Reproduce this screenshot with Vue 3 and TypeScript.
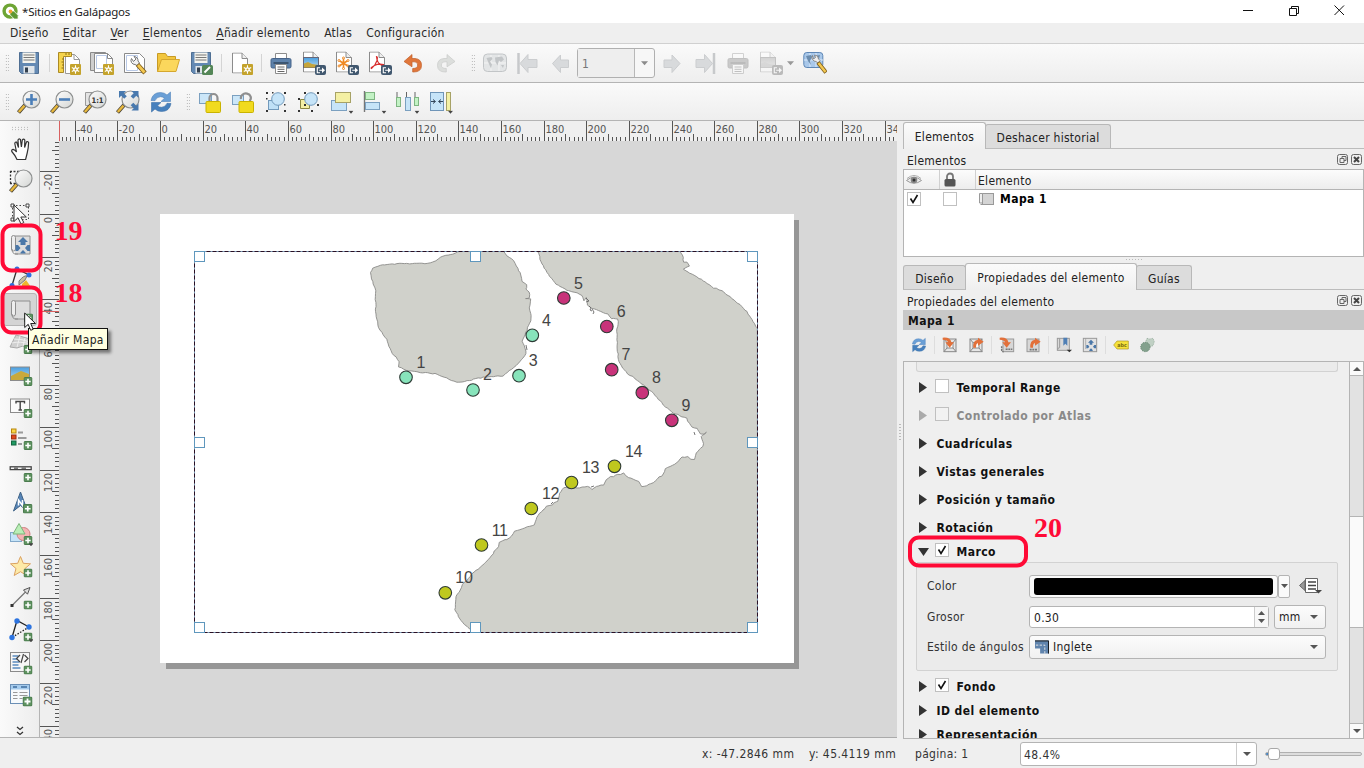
<script setup lang="ts">
type Pt = [number, number]

const menus = [
  { pre: 'Di', key: 's', post: 'eño' },
  { pre: '', key: 'E', post: 'ditar' },
  { pre: '', key: 'V', post: 'er' },
  { pre: '', key: 'E', post: 'lementos' },
  { pre: '', key: 'A', post: 'ñadir elemento' },
  { pre: 'Atlas', key: '', post: '' },
  { pre: 'Configuración', key: '', post: '' },
]

const barFile = ['save', '|', 'newlayout', 'duplicate', 'manager', 'folder', 'saveas', '|', 'addpage', '|', 'print', 'eximage', 'exsvg', 'expdf', 'undo', 'redo']
const barView = ['zoomin', 'zoomout', 'zoomone', 'zoomfull', 'refresh']
const barArrange = ['lock', 'unlock', 'group', 'ungroup', 'raise', 'align', 'distribute', 'resize']
const tools = ['hand', 'zoomarea', 'select', 'movecontent', 'editnodes', 'addmap', 'add3d', 'addimage', 'addlabel', 'addlegend', 'addscale', 'addnorth', 'addshape', 'addmarker', 'addarrow', 'addnode', 'addhtml', 'addtable']
const itemTools = ['refresh', '|', 'extset', 'extview', '|', 'scaleset', 'scaleview', '|', 'bookmark', 'move', '|', 'labels', 'clip']

const SCALE = 2.1315
const buildTicks = (origin: number, from: number, to: number) => {
  const out: { pos: number; size: number; label: string }[] = []
  for (let u = -60; u <= 360; u += 2) {
    const pos = Math.round(origin + u * SCALE) + 0.5
    if (pos < from || pos > to) continue
    out.push({ pos, size: u % 20 === 0 ? 20 : u % 10 === 0 ? 7 : 4, label: u % 20 === 0 ? String(u) : '' })
  }
  return out
}
const hTicks = buildTicks(160, 61, 897)
const vTicks = buildTicks(214, 142, 738)

/* Subdivides a coastline with a repeatable jitter so it looks naturally eroded. */
const coast = (pts: Pt[], amp: number): string => {
  let seed = 7
  const rnd = () => {
    seed = (seed * 16807) % 2147483647
    return seed / 2147483647 - 0.5
  }
  const out: string[] = []
  for (let i = 0; i < pts.length - 1; i++) {
    const [x1, y1] = pts[i]
    const [x2, y2] = pts[i + 1]
    const len = Math.hypot(x2 - x1, y2 - y1)
    const straight = len > 60
    const n = straight ? 1 : Math.max(1, Math.round(len / 2.6))
    for (let k = 0; k < n; k++) {
      const t = k / n
      const a = straight ? 0 : amp
      out.push(`${(x1 + (x2 - x1) * t + rnd() * a).toFixed(1)},${(y1 + (y2 - y1) * t + rnd() * a).toFixed(1)}`)
    }
  }
  out.push(pts[pts.length - 1].join(','))
  return 'M' + out.join('L')
}

const islandWest = coast([
  [460.3, 251], [453, 254], [443, 256], [433, 262], [427, 263.3], [397, 263.7], [380, 265.3], [372.7, 268], [370.3, 272.7],
  [371.7, 279], [375.3, 288.3], [375.6, 302], [376, 316.7], [378.7, 327.3], [386.7, 339], [391, 351], [398.7, 361.3], [398.7, 366.7],
  [406, 370.3], [420, 372.3], [435, 373.7], [444, 377.3], [456.7, 382.3], [466.7, 381], [483.3, 377.3], [503.3, 375.7],
  [511.7, 369.3], [520, 362.3], [526, 353.3], [524.5, 346], [522, 341], [526.7, 330], [531.3, 318.3], [529.3, 308], [530.5, 299], [525.5, 298.8], [529.5, 297.5],
  [529.3, 291.7], [526, 289.5], [527, 285], [522.3, 281.7], [520, 273], [515, 263.3], [512, 258.7], [507, 256], [503.3, 251],
], 0.9)

const islandEast = coast([
  [538.3, 251], [540.7, 261.7], [546.7, 272.3], [556, 284.3], [566.7, 290], [581.7, 295], [584, 301], [586.5, 297.5], [587, 305], [592, 308.3],
  [598.3, 310.7], [608.3, 314], [611, 319], [618, 318.5], [616.7, 340], [619, 361.7], [626, 372], [643.3, 385], [653.3, 393.3],
  [663.3, 405], [673.3, 413.3], [686.7, 418.3], [691.7, 427.7], [697, 428], [701, 434.5], [706.7, 432.7], [700.7, 436.7], [704, 444], [696.7, 453.3],
  [694, 460], [691, 459.5], [688, 457], [681.7, 456.7], [675, 464.3], [665, 468.3], [663.3, 474], [651, 484], [641.7, 486.7], [638.3, 481.7], [628.3, 477.3],
  [623.3, 473.3], [608.3, 477.7], [603.3, 485], [596, 486.3], [591.7, 489.3], [588, 486.3], [576.7, 488.3], [563.3, 487.7], [559.3, 493], [558, 501], [552, 504.5], [546.7, 506.7],
  [536.7, 517.3], [534.3, 524.3], [515, 531.7], [510, 538.3], [499.3, 542], [498, 547], [488, 560], [471.7, 574], [462.7, 585],
  [456, 596.7], [455, 610], [461, 621], [471.7, 631], [471.8, 633], [757.5, 633], [757.5, 328], [746.7, 311.7], [734, 300], [721.7, 290.7],
  [713.3, 287.7], [696.7, 276.7], [683.3, 269.3], [689.5, 266], [687, 262], [683.3, 261.7], [682.5, 255], [680, 251],
], 1.1)

const sites = [
  { n: 1, x: 406, y: 377.3, lx: 416.5, ly: 368, g: 'green' },
  { n: 2, x: 473, y: 390, lx: 483, ly: 380, g: 'green' },
  { n: 3, x: 519, y: 375.7, lx: 528.7, ly: 365.5, g: 'green' },
  { n: 4, x: 532.3, y: 335.3, lx: 542, ly: 325.7, g: 'green' },
  { n: 5, x: 563.8, y: 298, lx: 574, ly: 288.7, g: 'pink' },
  { n: 6, x: 606.8, y: 326.5, lx: 616.7, ly: 317, g: 'pink' },
  { n: 7, x: 611.7, y: 369.7, lx: 621.5, ly: 360, g: 'pink' },
  { n: 8, x: 642.3, y: 392.7, lx: 652, ly: 383, g: 'pink' },
  { n: 9, x: 671.8, y: 420.3, lx: 681.5, ly: 410.7, g: 'pink' },
  { n: 14, x: 614.5, y: 466.3, lx: 625, ly: 456.7, g: 'lime' },
  { n: 13, x: 571.5, y: 482.5, lx: 582, ly: 473, g: 'lime' },
  { n: 12, x: 531.3, y: 508.5, lx: 542, ly: 499, g: 'lime' },
  { n: 11, x: 481.5, y: 545, lx: 491.7, ly: 536, g: 'lime' },
  { n: 10, x: 445.3, y: 592.8, lx: 455.3, ly: 583, g: 'lime' },
]
const grips: Pt[] = [[194.5, 251.5], [470.5, 251.5], [747.5, 251.5], [194.5, 437.5], [747.5, 437.5], [194.5, 622.5], [470.5, 622.5], [747.5, 622.5]]

interface Section { label: string; check?: 'on' | 'off'; dim?: boolean }
const upper: Section[] = [
  { label: 'Temporal Range', check: 'off' },
  { label: 'Controlado por Atlas', check: 'off', dim: true },
  { label: 'Cuadrículas' },
  { label: 'Vistas generales' },
  { label: 'Posición y tamaño' },
  { label: 'Rotación' },
]
const lower: Section[] = [{ label: 'Fondo', check: 'on' }, { label: 'ID del elemento' }, { label: 'Representación' }]
</script>

<template>
  <div class="window">
    <svg class="defs" width="0" height="0">
      <defs>
        <linearGradient id="gGlass" x1="0" y1="0" x2="1" y2="1"><stop offset="0" stop-color="#fdfdfd" /><stop offset="1" stop-color="#d4d6d4" /></linearGradient>
        <linearGradient id="gSky" x1="0" y1="0" x2="0" y2="1"><stop offset="0" stop-color="#4a9fe0" /><stop offset="1" stop-color="#b5d8ee" /></linearGradient>
        <symbol id="b-plus" viewBox="0 0 9 9"><rect x=".5" y=".5" width="8" height="8" rx="1" fill="#5e9360" stroke="#4a7b4d" /><path d="M4.500 1.800v5.400M1.800 4.500h5.400" stroke="#fff" stroke-width="1.600" /></symbol>
        <symbol id="b-star" viewBox="0 0 11 11"><rect width="11" height="11" rx="1" fill="#c4a32c" /><path d="M5.500 1.200v8.600M1.800 3.400l7.400 4.200M9.200 3.400L1.800 7.600" stroke="#fff" stroke-width="1.100" /><circle cx="5.500" cy="5.500" r="2.300" fill="#fff" /><circle cx="5.500" cy="5.500" r="1" fill="#c4a32c" /></symbol>
        <symbol id="b-exp" viewBox="0 0 11 11"><rect width="11" height="10" rx="2" fill="#41586f" /><path d="M5 2.800H2.300v5H5M4.200 5.300h3.400" fill="none" stroke="#fff" stroke-width="1.100" /><path d="M7 2.600L10 5.300 7 8z" fill="#fff" /></symbol>
        <symbol id="page" viewBox="0 0 16 21"><path d="M.5.500h9.500l5.500 5.500v14.500H.5z" fill="#fff" stroke="#8c8c8c" /><path d="M10 .5V6h5.500" fill="#eee" stroke="#8c8c8c" /></symbol>
        <symbol id="lens" viewBox="0 0 24 24"><path d="M1.500 22.500L8.500 14.500" stroke="#4b4435" stroke-width="4" /><path d="M1.800 22L7.500 15.600" stroke="#e8b93e" stroke-width="2.400" /><circle cx="14.500" cy="9.500" r="8.500" fill="url(#gGlass)" stroke="#8d8f8f" stroke-width="1.200" /></symbol>
        <symbol id="drop" viewBox="0 0 6 4"><path d="M0 0h6L3 3.500z" fill="#444" /></symbol>
        <symbol id="scroll" viewBox="0 0 20 20"><path d="M4 1h15v18H4" fill="#ddd" stroke="#8e8e8e" /><rect x=".5" y=".5" width="4" height="15.500" rx="2" fill="#eee" stroke="#8e8e8e" /><path d="M1 14q0 5 4 5h2" fill="none" stroke="#8e8e8e" /></symbol>

        <symbol id="save" viewBox="0 0 24 24"><path d="M2.500 1.500h19v21h-17l-2-2z" fill="#6389b3" stroke="#4f6f93" /><rect x="5.500" y="1.500" width="13" height="10.500" fill="#f4f4ee" /><path d="M6.500 4h11M6.500 6.500h11M6.500 9h11" stroke="#777" /><rect x="6.500" y="15" width="11" height="7.500" fill="#dfe5ea" /><rect x="8" y="16.500" width="3" height="5" fill="#33414f" /></symbol>
        <symbol id="saveas" viewBox="0 0 24 24"><use href="#save" /><rect x="13" y="14" width="11" height="10" rx="1.500" fill="#548657" /><path d="M15.500 21.500l5.500-5.500" stroke="#fff" stroke-width="2" /></symbol>
        <symbol id="newlayout" viewBox="0 0 24 24"><path d="M8.500 3.500h9l5 5v14h-14z" fill="#fff" stroke="#999" /><path d="M17 3.500v5h5.500" fill="none" stroke="#999" /><path d="M1.500 1.500h13v4h-8v16h-5z" fill="#f5d34b" stroke="#ab8a24" /><path d="M5 8h2M4.500 11h2M5 14h2M4.500 17h2M9 2v2M12 2v2" stroke="#8a6e1a" /><use href="#b-star" x="13" y="13" width="11" height="11" /></symbol>
        <symbol id="duplicate" viewBox="0 0 24 24"><path d="M.5 1.500h15v18h-15z" fill="#cfcfcf" stroke="#8a8a8a" /><path d="M4.500 2.500h13l5 5v14h-18z" fill="#fff" stroke="#8a8a8a" /><path d="M6.500 4.500h10v13h-10z" fill="#fff" stroke="#b9c9e6" /><path d="M17.500 2.500v5h5" fill="none" stroke="#8a8a8a" /><use href="#b-star" x="13" y="13" width="11" height="11" /></symbol>
        <symbol id="manager" viewBox="0 0 24 24"><path d="M1.500 2.500h15l5 5v14h-20z" fill="#fff" stroke="#8a8a8a" /><path d="M3.500 4.500h11v15h-11z" fill="none" stroke="#b9c9e6" /><path d="M8.500 7.500a4 4 0 0 0 3.500 6l2 1 2.500-2.500-1.500-2a4 4 0 0 0-4-4.500l2 2.500-2.500 2.500z" fill="#f2f2f2" stroke="#777" /><path d="M14.500 13.500l7.500 8.500" stroke="#7c5c1c" stroke-width="4.500" /><path d="M15 14l6.500 7.500" stroke="#f3c74f" stroke-width="2.800" /></symbol>
        <symbol id="folder" viewBox="0 0 24 24"><path d="M1.500 20.500v-18h8l2 3h8v4" fill="#f2c63e" stroke="#c79a25" /><path d="M1.500 20.500l4-12h18l-3.500 12z" fill="#fbd75c" stroke="#d5a72e" /></symbol>
        <symbol id="addpage" viewBox="0 0 24 24"><use href="#page" x="3" y="1.500" width="16" height="21" /><use href="#b-star" x="13" y="13" width="11" height="11" /></symbol>
        <symbol id="print" viewBox="0 0 24 24"><path d="M6.500 9v-6.500h11v6.500z" fill="#fff" stroke="#8c8c8c" /><rect x="2" y="7.500" width="20" height="9.500" rx="1.500" fill="#5e82ab" stroke="#47648a" /><path d="M4.500 12h15" stroke="#33475f" stroke-width="1.500" /><path d="M6.500 13.500h11v9h-11z" fill="#fff" stroke="#8c8c8c" /><path d="M8.500 16h7M8.500 18.300h7M8.500 20.500h7" stroke="#666" /></symbol>
        <symbol id="eximage" viewBox="0 0 24 24"><use href="#page" x="1" y=".5" width="16" height="21" /><rect x="1.500" y="6.500" width="15" height="10" fill="url(#gSky)" stroke="#667" /><path d="M2 16.500v-4l4-1.500 4 2 6.500 1v2.500z" fill="#c7a53a" /><use href="#b-exp" x="13" y="14" width="11" height="11" /></symbol>
        <symbol id="exsvg" viewBox="0 0 24 24"><use href="#page" x="1" y=".5" width="16" height="21" /><path d="M8.500 7v10.500M4 9.500l9 5.500M13 9.500l-9 5.500" stroke="#f08a24" stroke-width="1.600" /><g fill="#fff" stroke="#f08a24"><circle cx="8.500" cy="7" r="1" /><circle cx="8.500" cy="17.500" r="1" /><circle cx="4" cy="9.500" r="1" /><circle cx="13" cy="15" r="1" /><circle cx="13" cy="9.500" r="1" /><circle cx="4" cy="15" r="1" /></g><use href="#b-exp" x="13" y="14" width="11" height="11" /></symbol>
        <symbol id="expdf" viewBox="0 0 24 24"><use href="#page" x="1" y=".5" width="16" height="21" /><path d="M8.500 5.500q1.500 0 .5 4-1.500 5-5.500 8-1.500-.5 3-3 4-2 9-1 .5 1.500-2 .8-4.500-2-5-8.800z" fill="none" stroke="#d83030" stroke-width="1.200" /><use href="#b-exp" x="13" y="14" width="11" height="11" /></symbol>
        <symbol id="undo" viewBox="0 0 24 24"><path d="M3 10.500l8-7v4h3q6.500.5 6.500 7t-8 6.500h-.8v-3.500q5 0 5-3.500t-3.500-3.200h-2.200v5z" fill="#e0763a" stroke="#c05f28" stroke-width=".7" /></symbol>
        <symbol id="redo" viewBox="0 0 24 24"><path d="M21 10.500l-8-7v4h-3q-6.500.5-6.500 7t8 6.500h.8v-3.500q-5 0-5-3.500t3.500-3.200h2.200v5z" fill="#dcdedc" stroke="#c8cac8" stroke-width=".7" /></symbol>
        <symbol id="atlas" viewBox="0 0 24 24"><rect x=".5" y="3" width="23" height="17.500" rx="4" fill="#e3e5e6" stroke="#c2c5c7" /><path d="M1 12h22M8 4v16M16 4v16" stroke="#f4f4f4" /><path d="M3.500 7l5-1 1 2-2.500 2.500 2 3-1 4-2-4.500zM12 6.500l7-1 2 3-3 2.500-2-1.500-1.500 5-2-3.500zM18 14l3 0-1 3z" fill="#c2c5c7" /></symbol>
        <symbol id="first" viewBox="0 0 24 24"><path d="M2.500 2v21" stroke="#c7c9cb" stroke-width="2.500" /><path d="M4 12.500l8-9v5h9v8h-9v5z" fill="#d8dadc" stroke="#cbcdcf" /></symbol>
        <symbol id="prev" viewBox="0 0 24 24"><path d="M3.500 12.500l8-8.500v5h8v7.500h-8v5z" fill="#d8dadc" stroke="#cbcdcf" /></symbol>
        <symbol id="next" viewBox="0 0 24 24"><path d="M20 12.500l-8-8.500v5h-8v7.500h8v5z" fill="#d8dadc" stroke="#cbcdcf" /></symbol>
        <symbol id="last" viewBox="0 0 24 24"><path d="M21 2v21" stroke="#c7c9cb" stroke-width="2.500" /><path d="M19.500 12.500l-8-9v5h-8.500v8h8.500v5z" fill="#d8dadc" stroke="#cbcdcf" /></symbol>
        <symbol id="atlasset" viewBox="0 0 24 24"><rect x=".8" y="1.500" width="19" height="15" rx="3" fill="#a9c8ea" stroke="#5d86b5" /><path d="M1 9h19M7 2v14M13 2v14" stroke="#dceafa" /><path d="M3 5l5-1 1 2-2 4 1 4-3-4zM11 5l6-1-1 4z" fill="#6b8cae" /><path d="M9.500 4.500a4 4 0 0 0 3.500 6l2 1.500 2-2.500-1.500-1.500a4 4 0 0 0-4-4l1 2.500-2 1.500z" fill="#eee" stroke="#777" stroke-width=".8" /><path d="M15 11.500l8 10" stroke="#7c5c1c" stroke-width="4" /><path d="M15.500 12l7 9" stroke="#f3c74f" stroke-width="2.400" /></symbol>

        <symbol id="zoomin" viewBox="0 0 24 24"><use href="#lens" /><path d="M14.500 4v11M9 9.500h11" stroke="#4c7fb8" stroke-width="2.600" /></symbol>
        <symbol id="zoomout" viewBox="0 0 24 24"><use href="#lens" /><path d="M9 9.500h11" stroke="#4c7fb8" stroke-width="2.600" /></symbol>
        <symbol id="zoomone" viewBox="0 0 24 24"><path d="M2.500 2.500h9v13h-9z" fill="#e4e4e4" stroke="#9a9a9a" /><use href="#lens" /><text x="14.500" y="12.500" text-anchor="middle" class="one">1:1</text></symbol>
        <symbol id="zoomfull" viewBox="0 0 24 24"><use href="#lens" /><g fill="#4879ae"><path d="M3 1h7L7.800 3.200l3 3-2.600 2.600-3-3L3 8zM22.500 1h-7l2.200 2.200-3 3 2.600 2.600 3-3L22.500 8zM22.500 20.500h-7l2.200-2.200-3-3 2.600-2.600 3 3 2.200-2.200z" /></g></symbol>
        <symbol id="refresh" viewBox="0 0 24 24"><path d="M2 10.500q1.500-8 9.500-8 4 0 6.500 2.500l3.500-3v9.500H12l3.500-3.300q-1.500-1.500-4-1.500-4 .2-5.500 4z" fill="#6a9fd6" stroke="#5083ba" stroke-width=".6" /><path d="M22 13.500q-1.500 8-9.500 8-4 0-6.500-2.500L2.500 22v-9.500H12l-3.500 3.300q1.500 1.500 4 1.500 4-.2 5.500-4z" fill="#4680bd" stroke="#3a6fa6" stroke-width=".6" /></symbol>
        <symbol id="lock" viewBox="0 0 24 24"><rect x="1.500" y="3.500" width="12" height="10" fill="#cbe6f8" stroke="#7ba0c0" /><path d="M11.500 12v-4a4 4 0 0 1 8 0v4" fill="none" stroke="#8f8f8f" stroke-width="2.200" /><rect x="8" y="11.500" width="14.500" height="11" rx="1" fill="#f1da1f" stroke="#c9b300" /></symbol>
        <symbol id="unlock" viewBox="0 0 24 24"><rect x="1.500" y="5.500" width="11" height="9" fill="#cbe6f8" stroke="#7ba0c0" /><path d="M10 9a5 4.500 0 1 1 8.500 2" fill="none" stroke="#8f8f8f" stroke-width="2.200" /><rect x="8" y="11.500" width="14.500" height="11" rx="1" fill="#f1da1f" stroke="#c9b300" /></symbol>
        <symbol id="corners" viewBox="0 0 24 24"><path d="M2 2h2v2H2zM20 2h2v2h-2zM2 20h2v2H2zM20 20h2v2h-2zM8 2h1.500v1.500H8zM20 14h1.500v1.500H20zM2 8h1.500v1.500H2z" fill="#333" /></symbol>
        <symbol id="group" viewBox="0 0 24 24"><rect x="4.500" y="10.500" width="10" height="9" fill="#bfe0f6" stroke="#7199bb" /><circle cx="14" cy="9" r="6.300" fill="#c6e4f8" stroke="#7199bb" /><use href="#corners" /></symbol>
        <symbol id="ungroup" viewBox="0 0 24 24"><path d="M3.500 9.500h9v9h-9z" fill="#f4f0a4" stroke="#8a8740" /><circle cx="14" cy="9" r="6.300" fill="#c6e4f8" stroke="#7199bb" /><path d="M7 2h2v2H7zM20 2h2v2h-2zM1 8h2v2H1zM1 20h2v2H1zM14 20h2v2h-2zM20 14h2v2h-2zM7 14h2v2H7z" fill="#333" /></symbol>
        <symbol id="raise" viewBox="0 0 24 24"><rect x="1.500" y="10.500" width="15" height="10" fill="#c6e4f8" stroke="#7ba0c0" /><rect x="5.500" y="2.500" width="15" height="10" fill="#f4f0a4" stroke="#a7a266" /><use href="#drop" x="18.500" y="20.500" width="5" height="4" /></symbol>
        <symbol id="align" viewBox="0 0 24 24"><path d="M1.500 1v21" stroke="#777" stroke-width="1.400" /><rect x="2.500" y="2.500" width="9" height="7" fill="#c3f2c5" stroke="#7fb582" /><rect x="2.500" y="12.500" width="14" height="7" fill="#c6e4f8" stroke="#7ba0c0" /><use href="#drop" x="18.500" y="20.500" width="5" height="4" /></symbol>
        <symbol id="distribute" viewBox="0 0 24 24"><path d="M1 2v6M10.500 2v6M19 2v6" stroke="#666" /><rect x=".5" y="7.500" width="4" height="9" fill="#c3f2c5" stroke="#7fb582" /><rect x="9.500" y="7.500" width="5" height="13" fill="#c6e4f8" stroke="#7ba0c0" /><rect x="18.500" y="7.500" width="4" height="8" fill="#c3f2c5" stroke="#7fb582" /><use href="#drop" x="18.500" y="20.500" width="5" height="4" /></symbol>
        <symbol id="resize" viewBox="0 0 24 24"><rect x="1.500" y="2.500" width="13" height="18" fill="#c6e4f8" stroke="#6f95b8" /><rect x="17.500" y="2.500" width="4" height="18" fill="#f4f0a4" stroke="#a7a266" /><path d="M2 11.500h4M4 9.500l2.500 2-2.500 2M14 11.500h-4M12 9.500l-2.500 2 2.500 2" fill="none" stroke="#34465a" /><use href="#drop" x="19" y="20.500" width="5" height="4" /></symbol>

        <symbol id="hand" viewBox="0 0 24 24"><path d="M8 22.500Q6 18 2.800 14.500q-.6-2 1.400-2.100 1.800.6 3.300 2.600L5.800 6.500q.2-1.800 1.900-1.300l1.800 5.300L9 3.200q.6-2 2.400-.8l1 7.600.9-7q1.300-1.600 2.500 0l-.2 7.500 1.900-5.600q1.800-.8 2.100.8-.2 6-1.400 10.300l-1.600 6.500z" fill="#fff" stroke="#333" stroke-width="1.200" /></symbol>
        <symbol id="zoomarea" viewBox="0 0 24 24"><path d="M1 2.500h14M1.500 2v13M1 14.500h9" stroke="#333" stroke-dasharray="2 1.500" stroke-width="1.300" /><use href="#lens" /></symbol>
        <symbol id="select" viewBox="0 0 24 24"><path d="M3.500 4.500h16v14h-16z" fill="none" stroke="#444" stroke-dasharray="1.500 2" /><path d="M2 3h3v3H2zM17 3h3v3h-3zM2 17h3v3H2z" fill="#fff" stroke="#444" /><path d="M5 4v16.500l4-3.800 3 6.300 2.800-1.500-3-5.500h5.500z" fill="#fff" stroke="#333" /></symbol>
        <symbol id="movecontent" viewBox="0 0 24 24"><use href="#scroll" x="2" y="2" width="20" height="20" /><path d="M14 4l5 5h-2.500v3h-5V9H9zM6.500 12H9l2.500 3L9 18H6.500zM21 12h-2.500L16 15l2.500 3H21zM11.500 20.500v-1l2.500-2.500 2.500 2.500v1z" fill="#4a77a8" /></symbol>
        <symbol id="editnodes" viewBox="0 0 24 24"><path d="M3 20.500L8 4l12 6" fill="none" stroke="#333" stroke-width="1.300" /><path d="M10 16q5-6 8-5l-2 4-6 5z" fill="#c8bfa0" stroke="#777" /><path d="M13 19l4-4 5 7h-9z" fill="#ecb92d" /><g fill="#2d6fe0"><circle cx="8" cy="4" r="2.500" /><circle cx="20" cy="10" r="2.500" /><circle cx="3" cy="20.500" r="2.500" /></g></symbol>
        <symbol id="addmap" viewBox="0 0 24 24"><use href="#scroll" x="2" y="2" width="20" height="20" /><use href="#b-plus" x="15" y="15.500" width="9" height="9" /></symbol>
        <symbol id="add3d" viewBox="0 0 24 24"><path d="M1 17L7 5l14 4 1 9-8-2-6 2z" fill="#d0d0d0" stroke="#aaa" /><path d="M3 13q8-2 19 1M5 9q8 0 16 3M11 6l-3 11M16 8l-2 8" stroke="#eee" fill="none" /><use href="#b-plus" x="14.500" y="15" width="9" height="9" /></symbol>
        <symbol id="addimage" viewBox="0 0 24 24"><rect x="1.500" y="5" width="19" height="13.500" fill="url(#gSky)" stroke="#8b8b8b" /><path d="M2 18v-4l10-5 8 3v6z" fill="#c9a93c" /><use href="#b-plus" x="14.500" y="15" width="9" height="9" /></symbol>
        <symbol id="addlabel" viewBox="0 0 24 24"><rect x="1.500" y="5" width="19" height="13.500" fill="#fbfbfb" stroke="#8b8b8b" /><path d="M7 9.500v-2h8.500v2M11.200 7.500v8.500M9.500 16h3.500" fill="none" stroke="#444" stroke-width="1.400" /><use href="#b-plus" x="14.500" y="15" width="9" height="9" /></symbol>
        <symbol id="addlegend" viewBox="0 0 24 24"><rect x="2.500" y="3" width="4.500" height="4" fill="#f9d648" stroke="#b8860b" /><rect x="2.500" y="9" width="4.500" height="4" fill="#e0481c" stroke="#9c2f10" /><rect x="2.500" y="15" width="4.500" height="4" fill="#1f9a63" stroke="#14653f" /><path d="M9 6.500h5M9 12h8.500M9 18h4" stroke="#9a9a9a" stroke-width="1.800" /><use href="#b-plus" x="14.500" y="15" width="9" height="9" /></symbol>
        <symbol id="addscale" viewBox="0 0 24 24"><rect x="1.200" y="8.800" width="21" height="2.800" fill="#fff" stroke="#444" stroke-width="1.300" /><path d="M5 10.200h4M12.500 10.200h4.500" stroke="#777" stroke-width="1.800" /><use href="#b-plus" x="14.500" y="15" width="9" height="9" /></symbol>
        <symbol id="addnorth" viewBox="0 0 24 24"><path d="M11.500 2L18.500 21l-7-5.500L4.500 21z" fill="#5886b8" stroke="#3d6185" /><path d="M9.500 15.500v-5.500l4 5.500v-5.500" fill="none" stroke="#fff" stroke-width="1.500" /><use href="#b-plus" x="14" y="14" width="9.500" height="9.500" /></symbol>
        <symbol id="addshape" viewBox="0 0 24 24"><rect x="1.500" y="10.500" width="11" height="9" fill="#c6e4f8" stroke="#83a9ca" /><circle cx="14.500" cy="12" r="6.500" fill="#f4b3b3" stroke="#cf8080" /><path d="M10 1.500l6 10.500H4z" fill="#b9eeb6" stroke="#7cb57b" /><use href="#b-plus" x="14.500" y="14" width="9" height="9" /><use href="#drop" x="19.500" y="21" width="5" height="4" /></symbol>
        <symbol id="addmarker" viewBox="0 0 24 24"><path d="M11.500 2.500l2.800 6.800 7.200.5-5.500 4.700 1.800 7-6.300-3.800-6.300 3.800 1.800-7-5.500-4.700 7.200-.5z" fill="#fdeaa8" stroke="#dba262" /><use href="#b-plus" x="14.500" y="14.500" width="9" height="9" /></symbol>
        <symbol id="addarrow" viewBox="0 0 24 24"><path d="M3 19.500L18 4.500" stroke="#777" stroke-width="1.300" /><path d="M21 1.500L14.500 4l4 4.200z" fill="#ddd" stroke="#555" /><rect x="1.500" y="18" width="3" height="3" fill="#333" /><use href="#b-plus" x="14.500" y="14.500" width="9" height="9" /></symbol>
        <symbol id="addnode" viewBox="0 0 24 24"><path d="M3 19.500L8 2.500l12 6.500" fill="none" stroke="#222" stroke-width="1.300" /><path d="M20 9L3 19.500" stroke="#222" stroke-width="1.300" stroke-dasharray="1.500 1.500" /><g fill="#2d74e0"><circle cx="8" cy="3" r="2.700" /><circle cx="20" cy="9" r="2.700" /><circle cx="3" cy="19.500" r="2.700" /></g><use href="#b-plus" x="14.500" y="14.500" width="9" height="9" /><use href="#drop" x="19.500" y="21" width="5" height="4" /></symbol>
        <symbol id="addhtml" viewBox="0 0 24 24"><rect x="1.500" y="1.500" width="19" height="19" fill="#f7f7f7" stroke="#8b8b8b" /><path d="M3.500 5h6M3.500 8h5M3.500 11h7M3.500 14h6M3.500 17h8" stroke="#5b8cc0" stroke-width="1.300" /><path d="M11 4l-3.500 3.500L11 11M15.500 4l3.500 3.500-3.500 3.500M14.500 3l-2.500 9" fill="none" stroke="#444" stroke-width="1.200" /><use href="#b-plus" x="14.500" y="14.500" width="9" height="9" /></symbol>
        <symbol id="addtable" viewBox="0 0 24 24"><rect x="1.500" y="1.500" width="19" height="19" fill="#f7fafc" stroke="#6b8fb5" /><rect x="2" y="2" width="18" height="4.500" fill="#a5cbed" /><path d="M4 4h4M12 4h6" stroke="#3f6f9f" stroke-width="1.300" /><path d="M4 9.500h4.500M10.500 9.500h8M4 12.500h4.500M10.500 12.500h8M4 15.500h4.500M10.500 15.500h3" stroke="#999" /><use href="#b-plus" x="13.500" y="13.500" width="10" height="10" /></symbol>

        <symbol id="extbox" viewBox="0 0 24 24"><rect x="3" y="3" width="18" height="19" fill="#e6e6e6" stroke="#888" stroke-width="1.500" /><rect x="7.500" y="8.500" width="9" height="8" fill="#fff" stroke="#888" stroke-width="1.500" /><path d="M3 3l4.500 5.500M21 3l-4.500 5.500M3 22l4.500-5.500M21 22l-4.500-5.500" stroke="#888" stroke-width="1.500" /></symbol>
        <symbol id="extset" viewBox="0 0 24 24"><use href="#extbox" /><path d="M1 1q12-1 13 7h4l-6.500 8L5 8h4q-1-4-8-4z" fill="#e2703a" /></symbol>
        <symbol id="extview" viewBox="0 0 24 24"><use href="#extbox" /><path d="M8 16q-1-11 7-12V1l8.500 6L15 13V9q-3 .5-3 7z" fill="#e2703a" /></symbol>
        <symbol id="scaleset" viewBox="0 0 24 24"><rect x="6" y="3" width="16" height="19" fill="#d7d7d7" stroke="#999" stroke-width="1.500" /><path d="M4 14v6q0 2 3 2M10 18.500h10" stroke="#777" stroke-width="2.200" stroke-dasharray="3 1" fill="none" /><path d="M1 1q12-1 13 7h4l-6.500 8L5 8h4q-1-4-8-4z" fill="#e2703a" /></symbol>
        <symbol id="scaleview" viewBox="0 0 24 24"><rect x="3" y="3" width="18" height="19" fill="#d7d7d7" stroke="#999" stroke-width="1.500" /><path d="M7 19h12" stroke="#777" stroke-width="2.500" stroke-dasharray="3 1" /><path d="M8 16q-1-11 7-12V1l8.500 6L15 13V9q-3 .5-3 7z" fill="#e2703a" /></symbol>
        <symbol id="bookmark" viewBox="0 0 24 24"><rect x="2" y="2" width="18" height="18" fill="#dadada" stroke="#9a9a9a" stroke-width="1.500" /><path d="M5.500 2v14q-3 0-3 3" fill="none" stroke="#9a9a9a" stroke-width="1.500" /><path d="M11 1h6v12l-3-3-3 3z" fill="#4f7fb5" /><path d="M16 19h8l-4 4z" fill="#333" /></symbol>
        <symbol id="move" viewBox="0 0 24 24"><rect x="2" y="2" width="20" height="20" fill="#e2e2e2" stroke="#999" stroke-width="1.500" /><path d="M5.500 2v16" stroke="#999" /><path d="M13.500 4l4.500 4.500h-2.500v3h-4v-3H9zM6.500 12H9l2 2.500L9 17H6.500zM21 12h-2.500l-2 2.500 2 2.500H21zM11 21v-1.500l2.500-2.500 2.500 2.500V21z" fill="#4a77a8" /></symbol>
        <symbol id="labels" viewBox="0 0 24 24"><path d="M6 6h17v12H6l-5-6z" fill="#f6e23c" stroke="#aa9620" /><text x="13.500" y="15.500" text-anchor="middle" class="abc">abc</text></symbol>
        <symbol id="clip" viewBox="0 0 24 24"><path d="M12 2l4 1 5-1 2 5-2 6-6 2-4-3-1-5z" fill="#c0d0c4" stroke="#8ba393" stroke-dasharray="2 1.500" /><circle cx="9.500" cy="15" r="7" fill="#83a18d" stroke="#6b8a75" stroke-width="1.500" stroke-dasharray="2 1.500" /></symbol>
      </defs>
    </svg>

    <header class="title">
      <svg class="logo" viewBox="0 0 18 18"><circle cx="8.500" cy="8.500" r="6.300" fill="none" stroke="#6ea535" stroke-width="3.600" /><path d="M8.500 8.500h4l4.500 4.500v4h-4l-4.500-4.500z" fill="#5d9732" stroke="#fff" stroke-width=".8" /><circle cx="9" cy="9" r="2" fill="#f0a232" /></svg>
      <span class="caption">*Sitios en Galápagos</span>
      <svg class="winbtns" viewBox="0 0 110 23"><g fill="none" stroke="#111"><path d="M3 10.500h10M49.500 8.500h7v7h-7zM51.500 8.500v-2h7v7h-2M94.500 5.500l9.500 9.500M104 5.500L94.500 15" /></g></svg>
    </header>
    <nav class="menu"><span v-for="(m, i) in menus" :key="i">{{ m.pre }}<u v-if="m.key">{{ m.key }}</u>{{ m.post }}</span></nav>

    <div class="bar">
      <i class="grip" />
      <template v-for="(n, i) in barFile" :key="i">
        <i v-if="n === '|'" class="sep" />
        <span v-else class="slot"><svg><use :href="'#' + n" /></svg></span>
      </template>
      <i class="grip wide" />
      <span v-for="n in ['atlas', 'first', 'prev']" :key="n" class="slot"><svg><use :href="'#' + n" /></svg></span>
      <div class="pagebox"><span>1</span><b><svg viewBox="0 0 8 5"><path d="M0 0h8L4 4.500z" fill="#8b8b8b" /></svg></b></div>
      <span v-for="n in ['next', 'last']" :key="n" class="slot"><svg><use :href="'#' + n" /></svg></span>
      <span class="slot faded"><svg><use href="#print" /></svg></span>
      <span class="slot faded"><svg><use href="#eximage" /></svg></span>
      <svg class="caret" viewBox="0 0 8 5"><path d="M0 0h8L4 4.500z" fill="#999" /></svg>
      <span class="slot"><svg><use href="#atlasset" /></svg></span>
    </div>
    <div class="bar second">
      <i class="grip" />
      <span v-for="n in barView" :key="n" class="slot"><svg><use :href="'#' + n" /></svg></span>
      <i class="grip wide" />
      <span v-for="n in barArrange" :key="n" class="slot"><svg><use :href="'#' + n" /></svg></span>
    </div>

    <main class="body">
      <aside class="tools">
        <i class="griph" />
        <span v-for="n in tools" :key="n" class="tool" :class="{ pressed: n === 'addmap' }"><svg><use :href="'#' + n" /></svg></span>
        <svg class="more" viewBox="0 0 8 10"><path d="M1 1l3 2.500L7 1M1 6l3 2.500L7 6" fill="none" stroke="#333" stroke-width="1.300" /></svg>
      </aside>

      <svg class="canvas" viewBox="40 121 857 617">
        <rect x="40" y="121" width="857" height="617" fill="#efefef" />
        <g class="ruler">
          <path v-for="t in hTicks" :key="'h' + t.pos" :d="`M${t.pos} 141v-${t.size}`" />
          <path v-for="t in vTicks" :key="'v' + t.pos" :d="`M59 ${t.pos}h-${t.size}`" />
          <text v-for="t in hTicks" :key="'ht' + t.pos" :x="t.pos + 1" y="133">{{ t.label }}</text>
          <text v-for="t in vTicks" :key="'vt' + t.pos" text-anchor="end" :transform="`translate(51.500 ${t.pos + 2.500}) rotate(-90)`">{{ t.label }}</text>
        </g>
        <rect x="59" y="141" width="838" height="597" fill="#d7d7d7" />
        <path d="M59.500 121v20M40 311.500h19" stroke="#d86060" />
        <rect x="166" y="220" width="633" height="449" fill="#969696" />
        <rect x="160" y="214" width="634" height="449" fill="#fff" />
        <svg x="194" y="251" width="564" height="382" viewBox="194 251 564 382">
          <g fill="#d0d1cb" stroke="#8a8a88" stroke-width=".9">
            <path :d="islandWest" />
            <path :d="islandEast" />
            <path d="M589 306l2 2-1 2 2 1M592 309l2 3-1 2M694 432l1 3M586 298l3 3-3 1M526 345l1 5M591 487l3-1M551 504l2-2" fill="none" stroke="#666" />
          </g>
        </svg>
        <g v-for="s in sites" :key="s.n">
          <circle :cx="s.x" :cy="s.y" r="6.300" :class="['dot', s.g]" />
          <text :x="s.lx" :y="s.ly" class="num">{{ s.n }}</text>
        </g>
        <g fill="none">
          <rect x="194.500" y="251.500" width="563" height="381" stroke="#7ea1bb" />
          <rect x="194.500" y="251.500" width="563" height="381" stroke="#2a1025" stroke-dasharray="4 2" />
        </g>
        <rect v-for="g in grips" :key="g.join()" :x="g[0]" :y="g[1]" width="10" height="10" fill="#fff" stroke="#5f97bd" />
        <path d="M40 737.500h857" stroke="#aaa" />
      </svg>

      <section class="dock">
        <div class="tabs one-tabs">
          <span class="tab active t1">Elementos</span><span class="tab t2">Deshacer historial</span>
        </div>
        <div class="docktitle"><span>Elementos</span><svg viewBox="0 0 26 12"><g fill="none" stroke="#666"><rect x=".5" y=".5" width="10" height="10" rx="2" /><rect x="14.500" y=".5" width="10" height="10" rx="2" /><path d="M3 4.500h4v4H3zM5 4.500v-2h4v4H7" /><path d="M17 3l5 5M22 3l-5 5" stroke="#444" stroke-width="2" /></g></svg></div>
        <div class="table">
          <div class="thead">
            <span class="c1"><svg viewBox="0 0 16 12"><path d="M.5 6.500Q8 0 15.500 6.500 8 12 .5 6.500z" fill="#eee" stroke="#999" /><path d="M1 4.500Q8-1.500 15 4.500" fill="none" stroke="#aaa" /><circle cx="8" cy="6" r="3.300" fill="#888" /><circle cx="8" cy="6" r="1.500" fill="#333" /></svg></span>
            <span class="c2"><svg viewBox="0 0 12 15"><path d="M3 7V4.500a3 3 0 0 1 6 0V7" fill="none" stroke="#777" stroke-width="1.800" /><rect x=".5" y="7" width="11" height="7.500" rx="1.500" fill="#555" /></svg></span>
            <span class="c3">Elemento</span>
          </div>
          <div class="trow">
            <i class="check on"><svg viewBox="0 0 12 12"><path d="M2.500 5.500l2.500 4L9.500 2" fill="none" stroke="#111" stroke-width="1.600" /></svg></i>
            <i class="check" />
            <svg class="mini" viewBox="0 0 15 12"><rect x="3.500" y=".5" width="11" height="11" fill="#d4d4d4" stroke="#999" /><path d="M.5.500h3v9.500h-3zM1.500 11.500h3" fill="#eee" stroke="#999" /></svg>
            <b>Mapa 1</b>
          </div>
        </div>
        <i class="splitdots" />
        <div class="tabs two-tabs">
          <span class="tab t3">Diseño</span><span class="tab active t4">Propiedades del elemento</span><span class="tab t5">Guías</span>
        </div>
        <div class="docktitle second-title"><span>Propiedades del elemento</span><svg viewBox="0 0 26 12"><g fill="none" stroke="#666"><rect x=".5" y=".5" width="10" height="10" rx="2" /><rect x="14.500" y=".5" width="10" height="10" rx="2" /><path d="M3 4.500h4v4H3zM5 4.500v-2h4v4H7" /><path d="M17 3l5 5M22 3l-5 5" stroke="#444" stroke-width="2" /></g></svg></div>
        <div class="band">Mapa 1</div>
        <div class="itembar">
          <template v-for="(n, i) in itemTools" :key="i">
            <i v-if="n === '|'" class="sep" />
            <span v-else><svg><use :href="'#' + n" /></svg></span>
          </template>
        </div>
        <div class="scroll">
          <div class="props">
            <div class="tail" />
            <div v-for="s in upper" :key="s.label" class="row" :class="{ dim: s.dim }">
              <svg class="arrow" viewBox="0 0 8 11"><path d="M0 0l8 5.500L0 11z" /></svg>
              <i v-if="s.check" class="check" /><b>{{ s.label }}</b>
            </div>
            <div class="row open">
              <svg class="arrow down" viewBox="0 0 11 8"><path d="M0 0h11L5.500 8z" /></svg>
              <i class="check on"><svg viewBox="0 0 12 12"><path d="M2.500 5.500l2.500 4L9.500 2" fill="none" stroke="#111" stroke-width="1.600" /></svg></i><b>Marco</b>
            </div>
            <div class="groupbox">
              <div class="field f1"><label>Color</label><div class="colorbtn"><i /></div><div class="colordrop"><svg viewBox="0 0 7 4"><path d="M0 0h7L3.500 4z" /></svg></div>
                <svg class="dd" viewBox="0 0 24 18"><path d="M6.500 1.500h12v14h-12z" fill="#fff" stroke="#666" /><path d="M6 3.500v10L.5 8.500z" fill="#999" stroke="#666" /><path d="M9 5h8M9 8.500h8M9 12h8" stroke="#444" stroke-width="1.400" /><path d="M16 13h7l-3.500 3.500z" fill="#444" /></svg>
              </div>
              <div class="field f2"><label>Grosor</label><div class="spin"><span>0.30</span><b><svg viewBox="0 0 7 12"><path d="M0 4h7L3.500 0zM0 8h7l-3.500 4z" /></svg></b></div><div class="combo unit">mm<svg viewBox="0 0 8 4"><path d="M0 0h8L4 4z" /></svg></div></div>
              <div class="field f3"><label>Estilo de ángulos</label><div class="combo join"><svg class="joinico" viewBox="0 0 15 14"><path d="M0 0h15v14H5.500V8.500H0z" fill="#6084ad" /><path d="M0 .5h14.500V14" fill="none" stroke="#111" /><path d="M1 5h9.500v9" fill="none" stroke="#e8e8e8" stroke-dasharray="2.500 1.500" /></svg>Inglete<svg viewBox="0 0 8 4"><path d="M0 0h8L4 4z" /></svg></div></div>
            </div>
            <div v-for="s in lower" :key="s.label" class="row tight">
              <svg class="arrow" viewBox="0 0 8 11"><path d="M0 0l8 5.500L0 11z" /></svg>
              <i v-if="s.check" class="check on"><svg viewBox="0 0 12 12"><path d="M2.500 5.500l2.500 4L9.500 2" fill="none" stroke="#111" stroke-width="1.600" /></svg></i><b>{{ s.label }}</b>
            </div>
          </div>
          <div class="vbar"><span class="up"><svg viewBox="0 0 8 4"><path d="M0 4h8L4 0z" /></svg></span><span class="track1" /><span class="thumb" /><span class="track2" /><span class="dn"><svg viewBox="0 0 8 4"><path d="M0 0h8L4 4z" /></svg></span></div>
        </div>
      </section>
      <i class="vdots" />
    </main>

    <footer class="status">
      <span class="sx">x: -47.2846 mm</span><span class="sy">y: 45.4119 mm</span><span class="sp">página: 1</span>
      <div class="zoombox"><span>48.4%</span><b><svg viewBox="0 0 8 4"><path d="M0 0h8L4 4z" /></svg></b></div>
      <div class="slider"><i /></div>
    </footer>

    <svg class="notes" viewBox="0 0 1364 768">
      <g fill="none" stroke="#ff0a36" stroke-width="4">
        <rect x="2.500" y="225.500" width="38" height="45" rx="9" />
        <rect x="2.500" y="287.500" width="38" height="45" rx="9" />
        <rect x="910" y="537.500" width="116" height="28" rx="9" />
      </g>
      <text x="54.500" y="240">19</text><text x="54.500" y="302">18</text><text x="1034" y="537">20</text>
    </svg>
    <div class="tip">Añadir Mapa</div>
    <svg class="cursor" viewBox="0 0 13 20"><path d="M.7 1v14.500l3.500-3.200 2.500 6 2.500-1-2.500-5.800h4.800z" fill="#fff" stroke="#222" stroke-width="1" /></svg>
  </div>
</template>

<style>
html, body { margin: 0; overflow: hidden; }
</style>
<style scoped>
* { box-sizing: border-box; }
.window { position: relative; width: 1364px; height: 768px; display: flex; flex-direction: column; background: #efefef; overflow: hidden; font: 12px/16px "DejaVu Sans Condensed", "Noto Sans", sans-serif; letter-spacing: .28px; color: #222; white-space: nowrap; }
b, .band { letter-spacing: .45px; }
svg { display: block; flex: none; }
i { display: block; font-style: normal; flex: none; }
.defs { position: absolute; }
.title { height: 23px; background: #fff; display: flex; align-items: center; padding-left: 2px; flex: none; }
.logo { width: 17px; height: 17px; }
.caption { margin-left: 3px; font-family: "Noto Sans", sans-serif; font-size: 11.500px; letter-spacing: -.2px; color: #222; }
.winbtns { width: 110px; height: 23px; margin-left: auto; margin-right: 14px; }
.menu { height: 21px; border-bottom: 1px solid #d0d0d0; flex: none; display: flex; align-items: center; padding-left: 10px; gap: 14px; color: #2a2a2a; }
.menu u { text-underline-offset: 2px; }
.bar { height: 39px; flex: none; display: flex; align-items: center; background: linear-gradient(#fafafa, #eee); border-bottom: 1px solid #b4b4b4; }
.bar.second { height: 38px; }
.slot { width: 33px; height: 33px; display: flex; align-items: center; justify-content: center; flex: none; }
.slot svg { width: 24px; height: 24px; }
.faded { filter: grayscale(1); opacity: .35; }
.grip { width: 4px; height: 18px; margin: 0 3.500px 0 5px; background: radial-gradient(circle, #aaa 0 .7px, transparent .8px) 0 0 / 2.500px 3px; }
.grip.wide { margin: 0 3.500px 0 8px; }
.sep { width: 1px; height: 18px; background: #d4d4d4; margin: 0 3px; }
.pagebox { width: 78px; height: 30px; display: flex; border: 1px solid #b0b0b0; border-radius: 3px; color: #777; flex: none; background: #f7f7f7; }
.pagebox span { flex: 1; padding: 7px 4px; background: #eee; }
.pagebox b { width: 20px; border-left: 1px solid #b8b8b8; display: grid; place-items: center; }
.pagebox svg, .caret { width: 7px; height: 5px; }
.caret { margin: 0 4px 0 0; }
.body { height: 617px; display: flex; flex: none; position: relative; }
.tools { width: 40px; border-right: 1px solid #b4b4b4; border-bottom: 1px solid #b4b4b4; background: linear-gradient(90deg, #fafafa, #ededed); display: flex; flex-direction: column; align-items: center; padding-top: 5px; }
.griph { width: 17px; height: 5px; margin-bottom: 2px; background: radial-gradient(circle, #aaa 0 .7px, transparent .8px) 0 0 / 3px 2.500px; }
.tool { height: 32.100px; width: 34px; display: flex; align-items: center; justify-content: center; flex: none; padding-left: 2px; }
.tool svg { width: 24px; height: 24px; }
.pressed { background: #d4d4d4; border: 1px solid #b5b5b5; border-radius: 3px; }
.more { width: 8px; height: 10px; margin-top: 15px; }
.canvas { width: 857px; height: 617px; }
.ruler path { stroke: #555; }
.ruler text { font: 11px "DejaVu Sans Condensed", "Noto Sans", sans-serif; letter-spacing: 0; fill: #555; }
.dot { stroke: #2e3a35; stroke-width: 1.100; }
.green { fill: #87e4bb; }
.pink { fill: #c8337a; }
.lime { fill: #bfc81e; }
.num { font: 16px "Liberation Sans", Arial, sans-serif; letter-spacing: -.3px; fill: #444; }
.one { font: bold 7.500px "DejaVu Sans Condensed", sans-serif; letter-spacing: 0; fill: #333; }
.abc { font: bold 8px "DejaVu Sans Condensed", sans-serif; letter-spacing: 0; fill: #776a10; }
.dock { width: 461px; margin-left: 6px; display: flex; flex-direction: column; }
.tabs { display: flex; align-items: flex-end; height: 28px; border-bottom: 1px solid #bcbcbc; flex: none; padding-top: 1px; }
.tab { height: 24px; border: 1px solid #b8b8b8; border-bottom: none; border-radius: 3px 3px 0 0; background: #dcdcdc; text-align: center; line-height: 26px; margin-left: -1px; }
.tab.active { height: 27px; background: linear-gradient(#fbfbfb, #efefef); margin-bottom: -1px; line-height: 28px; }
.t1 { width: 83px; margin-left: 0; } .t2 { width: 126px; }
.t3 { width: 63px; margin-left: 0; } .t4 { width: 172px; } .t5 { width: 56px; }
.docktitle { height: 20px; display: flex; align-items: center; justify-content: space-between; padding: 3px 1px 0 4px; flex: none; }
.docktitle svg { width: 26px; height: 12px; margin-bottom: 1px; }
.table { height: 88px; border: 1px solid #b4b4b4; background: #fff; flex: none; }
.thead { display: flex; height: 20px; background: linear-gradient(#fcfcfc, #ededed); border-bottom: 1px solid #b4b4b4; }
.thead span { height: 19px; display: flex; align-items: center; border-left: 1px solid #d0d0d0; }
.thead .c1 { width: 35px; border: none; padding-left: 2px; } .c1 svg { width: 16px; height: 12px; }
.thead .c2 { width: 36px; padding-left: 4px; } .c2 svg { width: 12px; height: 15px; }
.thead .c3 { padding: 3px 0 0 2px; }
.trow { display: flex; align-items: center; height: 18px; padding-left: 3px; color: #000; }
.check { width: 14px; height: 14px; border: 1px solid #c0c0c0; background: #fff; }
.check svg { width: 12px; height: 12px; }
.trow .check + .check { margin-left: 22px; }
.mini { width: 15px; height: 12px; margin: 0 6px 0 22px; }
.splitdots { height: 5px; width: 18px; margin: 0 auto; background: radial-gradient(circle, #bbb 0 .8px, transparent .9px) 0 0 / 3px 5px; }
.band { height: 20px; background: #c8c8c8; font-weight: bold; color: #111; padding: 3px 5px; flex: none; }
.itembar { height: 31px; flex: none; display: flex; align-items: center; padding: 0 0 2px 3px; }
.itembar span { width: 26px; display: flex; justify-content: center; }
.itembar svg { width: 16px; height: 16px; }
.itembar .sep { margin: 0 2px; background: #ddd; }
.scroll { height: 378px; border: 1px solid #b4b4b4; display: flex; flex: none; }
.props { flex: 1; overflow: hidden; height: 376px; padding: 0 11px 0 12px; }
.tail { height: 10px; border: 1px solid #d2d2d2; border-top: none; background: #ebebeb; border-radius: 0 0 3px 3px; margin-bottom: 1px; }
.row { height: 28px; display: flex; align-items: center; padding-left: 3px; color: #111; }
.row b { margin-left: 9.500px; padding-top: 1px; }
.row .check { margin-left: 8px; margin-bottom: 3px; }
.row .check + b { margin-left: 7.500px; }
.arrow { width: 8px; height: 11px; fill: #333; }
.row.dim { color: #8a8a8a; } .dim .arrow { fill: #aaa; } .dim .check { background: #f2f2f2; }
.arrow.down { width: 11px; height: 8px; margin-left: -1px; margin-right: -2px; }
.row.open { height: 21px; }
.groupbox { height: 109px; border: 1px solid #d2d2d2; border-radius: 2px; background: #ebebeb; padding: 11px 0 0 10px; margin-bottom: 3px; }
.row.tight { height: 24px; }
.field { display: flex; align-items: center; height: 24px; }
.field label { width: 102px; flex: none; color: #333; }
.f2 { margin-top: 7px; } .f3 { margin-top: 6px; }
.colorbtn { width: 249px; height: 23px; border: 1px solid #b4b4b4; border-radius: 3px; background: #fafafa; padding: 2px 4px; }
.colorbtn i { height: 17px; border-radius: 3px; background: #000; }
.colordrop { width: 12px; height: 23px; border: 1px solid #b4b4b4; border-radius: 2px; background: #fafafa; display: grid; place-items: center; }
.colordrop svg { width: 7px; height: 4px; }
.dd { width: 24px; height: 18px; margin-left: 9px; }
.spin { width: 240px; height: 22px; border: 1px solid #b4b4b4; border-radius: 3px; background: #fff; display: flex; }
.spin span { flex: 1; padding: 3px 4px; } .spin b { width: 14px; border-left: 1px solid #ccc; display: grid; place-items: center; background: #f7f7f7; }
.spin svg { width: 7px; height: 12px; }
.combo { height: 24px; border: 1px solid #b4b4b4; border-radius: 3px; background: linear-gradient(#fcfcfc, #f1f1f1); display: flex; align-items: center; justify-content: space-between; padding: 0 7px 0 4px; }
.combo svg:last-child { width: 8px; height: 4px; }
.combo svg, .spin svg, .colordrop svg, .vbar svg, .zoombox svg { fill: #555; }
.unit { width: 52px; margin-left: 5px; }
.join { width: 297px; justify-content: flex-start; }
.join .joinico { width: 14px; height: 14px; margin: 0 4px 0 1px; }
.join svg:last-child { margin-left: auto; }
.vbar { width: 14px; border-left: 1px solid #b4b4b4; display: flex; flex-direction: column; }
.vbar span { border-bottom: 1px solid #b4b4b4; display: grid; place-items: center; background: #fafafa; }
.vbar svg { width: 8px; height: 4px; }
.up { height: 14px; } .vbar .track1, .vbar .track2 { background: #e2e2e2; } .track1 { height: 141px; } .thumb { height: 111px; } .track2 { flex: 1; } .vbar .dn { height: 14px; border: none; }
.vdots { position: absolute; left: 898px; top: 302px; width: 4px; height: 18px; background: radial-gradient(circle, #bbb 0 .7px, transparent .8px) 0 0 / 4px 3px; }
.status { flex: 1; display: flex; align-items: center; padding: 2px 0 0 702px; color: #333; letter-spacing: .42px; }
.sx { width: 107px; } .sy { width: 106px; } .sp { width: 105px; letter-spacing: .3px; }
.zoombox { width: 237px; height: 24px; border: 1px solid #b4b4b4; border-radius: 3px; background: #fff; display: flex; }
.zoombox span { flex: 1; padding: 4px 3px; } .zoombox b { width: 20px; border-left: 1px solid #ccc; display: grid; place-items: center; } .zoombox svg { width: 8px; height: 4px; }
.slider { margin-left: 8px; width: 97px; height: 4px; border: 1px solid #b0b0b0; border-radius: 2px; background: linear-gradient(90deg, #4584c4 6px, #ddd 6px); display: flex; align-items: center; }
.slider i { width: 12px; height: 12px; border: 1px solid #a8a8a8; border-radius: 3px; background: #fff; margin-left: 2px; }
.notes { position: absolute; inset: 0; width: 1364px; height: 768px; }
.notes text { font: bold 28px "Liberation Serif", "Times New Roman", serif; letter-spacing: 0; fill: #ff0a36; }
.tip { position: absolute; left: 28px; top: 328px; width: 80px; height: 22px; border: 1px solid #111; background: #ffffe1; padding: 3px 3px; box-shadow: 3px 3px 3px rgba(0, 0, 0, .45); color: #222; letter-spacing: .35px; }
.cursor { position: absolute; left: 24px; top: 312px; width: 13px; height: 20px; }
</style>
